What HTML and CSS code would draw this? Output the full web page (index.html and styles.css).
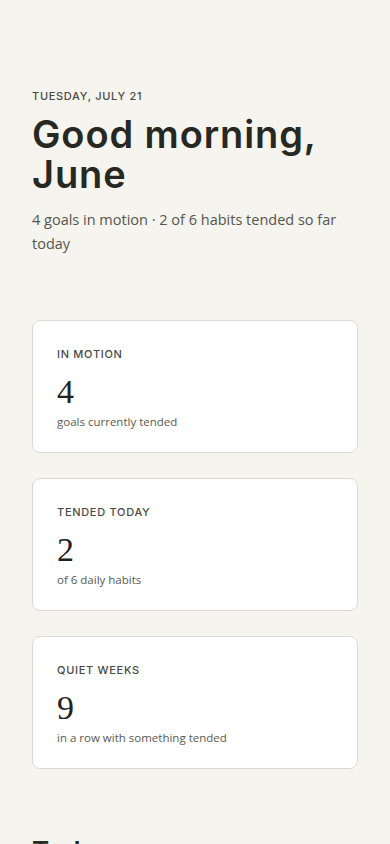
FILE: index.html
```html
<!DOCTYPE html>
<html lang="en">
<head>
  <meta charset="UTF-8">
  <title>Today</title>
  <link rel="stylesheet" href="styles.css">
</head>
<body>
  <main class="page">
    <header class="greeting">
      <p class="date">Tuesday, July 21</p>
      <h1>Good morning, June</h1>
      <p class="summary">4 goals in motion · 2 of 6 habits tended so far today</p>
    </header>

    <section class="stats">
      <div class="card">
        <p class="label">In motion</p>
        <p class="num">4</p>
        <p class="caption">goals currently tended</p>
      </div>
      <div class="card">
        <p class="label">Tended today</p>
        <p class="num">2</p>
        <p class="caption">of 6 daily habits</p>
      </div>
      <div class="card">
        <p class="label">Quiet weeks</p>
        <p class="num">9</p>
        <p class="caption">in a row with something tended</p>
      </div>
    </section>

    <section class="today">
      <h2>Today</h2>
    </section>
  </main>
</body>
</html>
```

FILE: styles.css
```css
body {
  margin: 0;
  background: #f6f4ef;
  color: #2a2b25;
  font-family: "Open Sans", "Noto Sans", sans-serif;
}
p {
  margin: 0;
}
.page {
  padding: 88px 32px 40px;
}
.date {
  font-family: Inter, sans-serif;
  font-size: 11px;
  line-height: 16px;
  letter-spacing: 0.7px;
  text-transform: uppercase;
  font-weight: 500;
  color: #4a4a44;
}
h1 {
  margin: 10px 0 0;
  font-family: Inter, sans-serif;
  font-size: 38px;
  line-height: 40px;
  font-weight: 600;
  letter-spacing: 0.9px;
  color: #272822;
}
.summary {
  margin-top: 14px;
  font-size: 14.5px;
  line-height: 24px;
  color: #55554f;
}
.stats {
  margin-top: 64px;
  display: flex;
  flex-direction: column;
  gap: 25px;
}
.card {
  background: #fff;
  border: 1px solid #ddd9d0;
  border-radius: 8px;
  padding: 26px 24px 22px;
}
.label {
  font-family: Inter, sans-serif;
  font-size: 11px;
  line-height: 14px;
  letter-spacing: 0.7px;
  text-transform: uppercase;
  font-weight: 500;
  color: #4a4a44;
}
.num {
  margin-top: 11px;
  font-family: "Liberation Serif", serif;
  font-size: 34px;
  line-height: 40px;
  color: #22231e;
}
.caption {
  margin-top: 2px;
  font-size: 11.5px;
  line-height: 16px;
  color: #5a5a54;
}
.today h2 {
  margin: 66px 0 0;
  font-family: Inter, sans-serif;
  font-size: 26px;
  line-height: 32px;
  font-weight: 600;
  letter-spacing: 0.6px;
  color: #272822;
}
```
